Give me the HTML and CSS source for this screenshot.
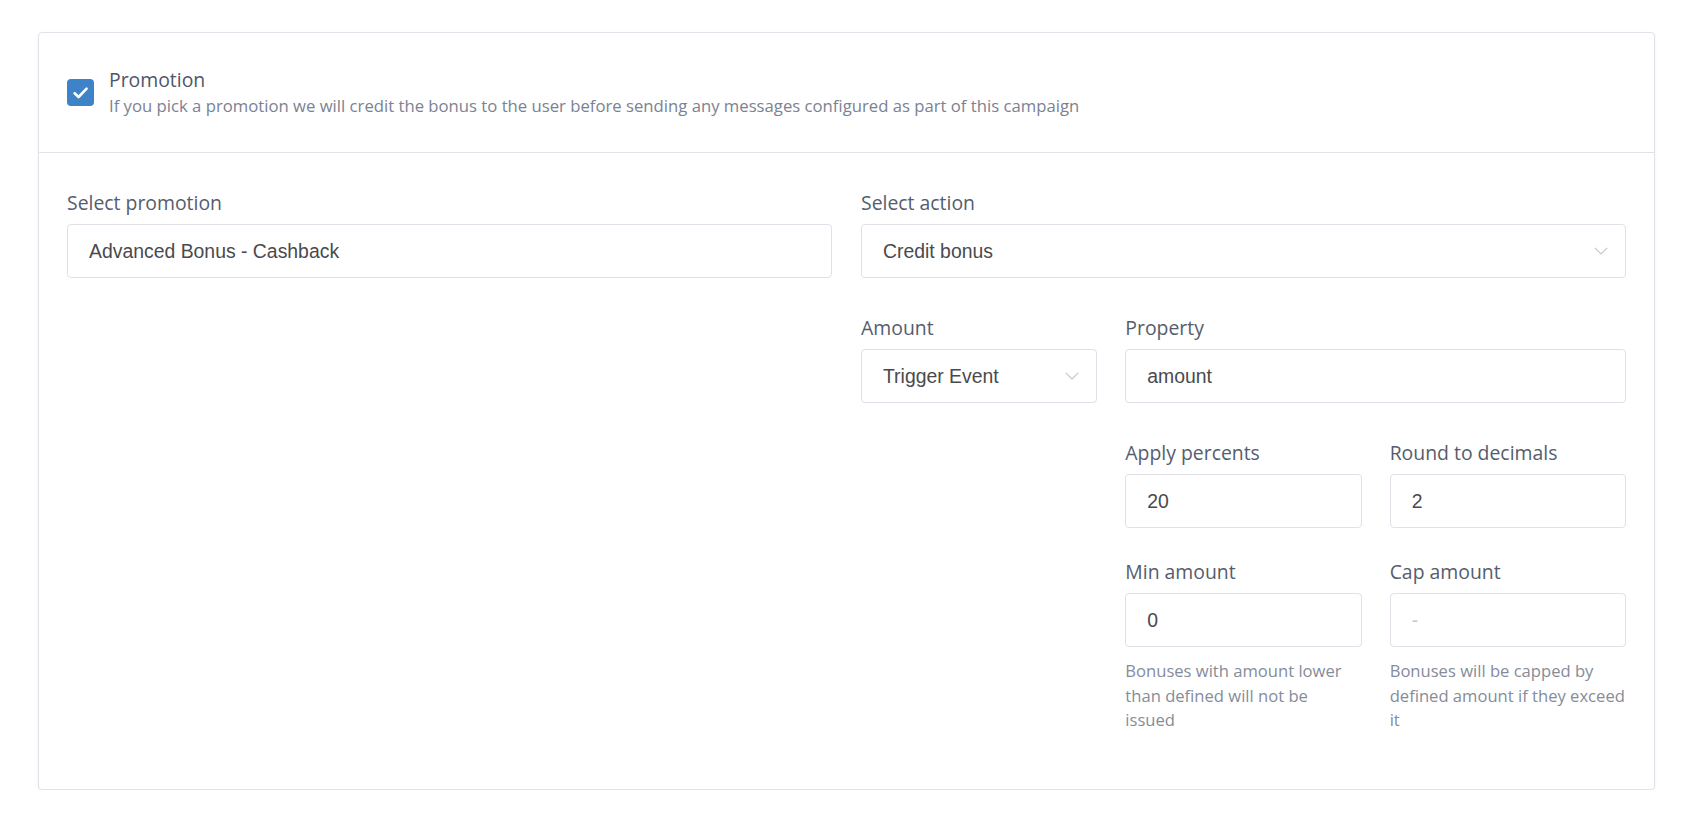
FILE: index.html
```html
<!DOCTYPE html>
<html lang="en">
<head>
<meta charset="utf-8">
<title>Promotion</title>
<link rel="stylesheet" href="styles.css">
</head>
<body>
<div class="page">
  <section class="card">
    <header class="card-head">
      <span class="checkbox">
        <svg viewBox="0 0 27 27" width="27" height="27"><path d="M7.6 14.2 L11.6 18 L19.6 9.6" fill="none" stroke="#fff" stroke-width="2.6" stroke-linecap="round" stroke-linejoin="round"/></svg>
      </span>
      <div class="head-text">
        <div class="title">Promotion</div>
        <div class="subtitle">If you pick a promotion we will credit the bonus to the user before sending any messages configured as part of this campaign</div>
      </div>
    </header>
    <div class="card-body">
      <div class="col-left">
        <div class="field">
          <label class="label">Select promotion</label>
          <div class="control">Advanced Bonus - Cashback</div>
        </div>
      </div>
      <div class="col-right">
        <div class="field span-3">
          <label class="label">Select action</label>
          <div class="control select">
            <span>Credit bonus</span>
            <svg class="chev" viewBox="0 0 14 8" width="14" height="8"><path d="M0.8 0.8 L7 7 L13.2 0.8" fill="none" stroke="#c3c6cf" stroke-width="1.2"/></svg>
          </div>
        </div>
        <div class="field spaced">
          <label class="label">Amount</label>
          <div class="control select">
            <span>Trigger Event</span>
            <svg class="chev" viewBox="0 0 14 8" width="14" height="8"><path d="M0.8 0.8 L7 7 L13.2 0.8" fill="none" stroke="#c3c6cf" stroke-width="1.2"/></svg>
          </div>
        </div>
        <div class="field span-2 spaced">
          <label class="label">Property</label>
          <div class="control">amount</div>
        </div>
        <div class="field col-2 spaced">
          <label class="label">Apply percents</label>
          <div class="control">20</div>
        </div>
        <div class="field col-3 spaced">
          <label class="label">Round to decimals</label>
          <div class="control">2</div>
        </div>
        <div class="field col-2">
          <label class="label">Min amount</label>
          <div class="control">0</div>
          <p class="help">Bonuses with amount lower than defined will not be issued</p>
        </div>
        <div class="field col-3">
          <label class="label">Cap amount</label>
          <div class="control placeholder">-</div>
          <p class="help">Bonuses will be capped by defined amount if they exceed it</p>
        </div>
      </div>
    </div>
  </section>
</div>
</body>
</html>
```

FILE: styles.css
```css
* {
  box-sizing: border-box;
}

html, body {
  margin: 0;
  padding: 0;
  background: #ffffff;
}

body {
  font-family: "Open Sans", "Noto Sans", sans-serif;
  color: #525a6b;
}

.page {
  padding: 32px 51px 0 38px;
}

.card {
  border: 1px solid #e2e3ea;
  border-radius: 4px;
  background: #fff;
  box-shadow: 0 1px 3px rgba(40, 45, 70, 0.07);
}

.card-head {
  display: flex;
  align-items: center;
  height: 120px;
  padding: 0 28px;
  border-bottom: 1px solid #e2e3ea;
}

.checkbox {
  flex: none;
  width: 27px;
  height: 27px;
  border-radius: 4px;
  background: #3e82c7;
  display: flex;
  align-items: center;
  justify-content: center;
  margin-right: 15px;
}

.checkbox svg {
  display: block;
}

.head-text {
  display: flex;
  flex-direction: column;
}

.title {
  font-size: 19.4px;
  line-height: 26px;
  color: #4f5768;
}

.subtitle {
  font-size: 16.7px;
  line-height: 26px;
  color: #7b8292;
}

.card-body {
  display: grid;
  grid-template-columns: 1fr 1fr;
  column-gap: 29px;
  padding: 37px 28px 56px 28px;
}

.col-right {
  display: grid;
  grid-template-columns: 1fr 1fr 1fr;
  column-gap: 28px;
  row-gap: 31px;
  align-content: start;
}

.span-3 {
  grid-column: 1 / span 3;
}

.span-2 {
  grid-column: 2 / span 2;
}

.col-2 {
  grid-column: 2;
}

.col-3 {
  grid-column: 3;
}

.spaced {
  margin-top: 6px;
}

.field {
  display: flex;
  flex-direction: column;
  min-width: 0;
}

.label {
  display: block;
  font-size: 19.4px;
  line-height: 26px;
  color: #555d6d;
  margin-bottom: 8px;
}

.control {
  height: 54px;
  border: 1px solid #dfe1e8;
  border-radius: 4px;
  background: #fff;
  display: flex;
  align-items: center;
  padding: 0 17px 0 21px;
  font-family: "Liberation Sans", Arial, sans-serif;
  font-size: 19.4px;
  color: #4a4a4d;
}

.control.select {
  justify-content: space-between;
}

.chev {
  display: block;
  flex: none;
}

.control.placeholder {
  color: #c6c8ce;
}

.help {
  margin: 12px 0 0 0;
  font-size: 16.6px;
  line-height: 24.5px;
  color: #858c9a;
}
```
